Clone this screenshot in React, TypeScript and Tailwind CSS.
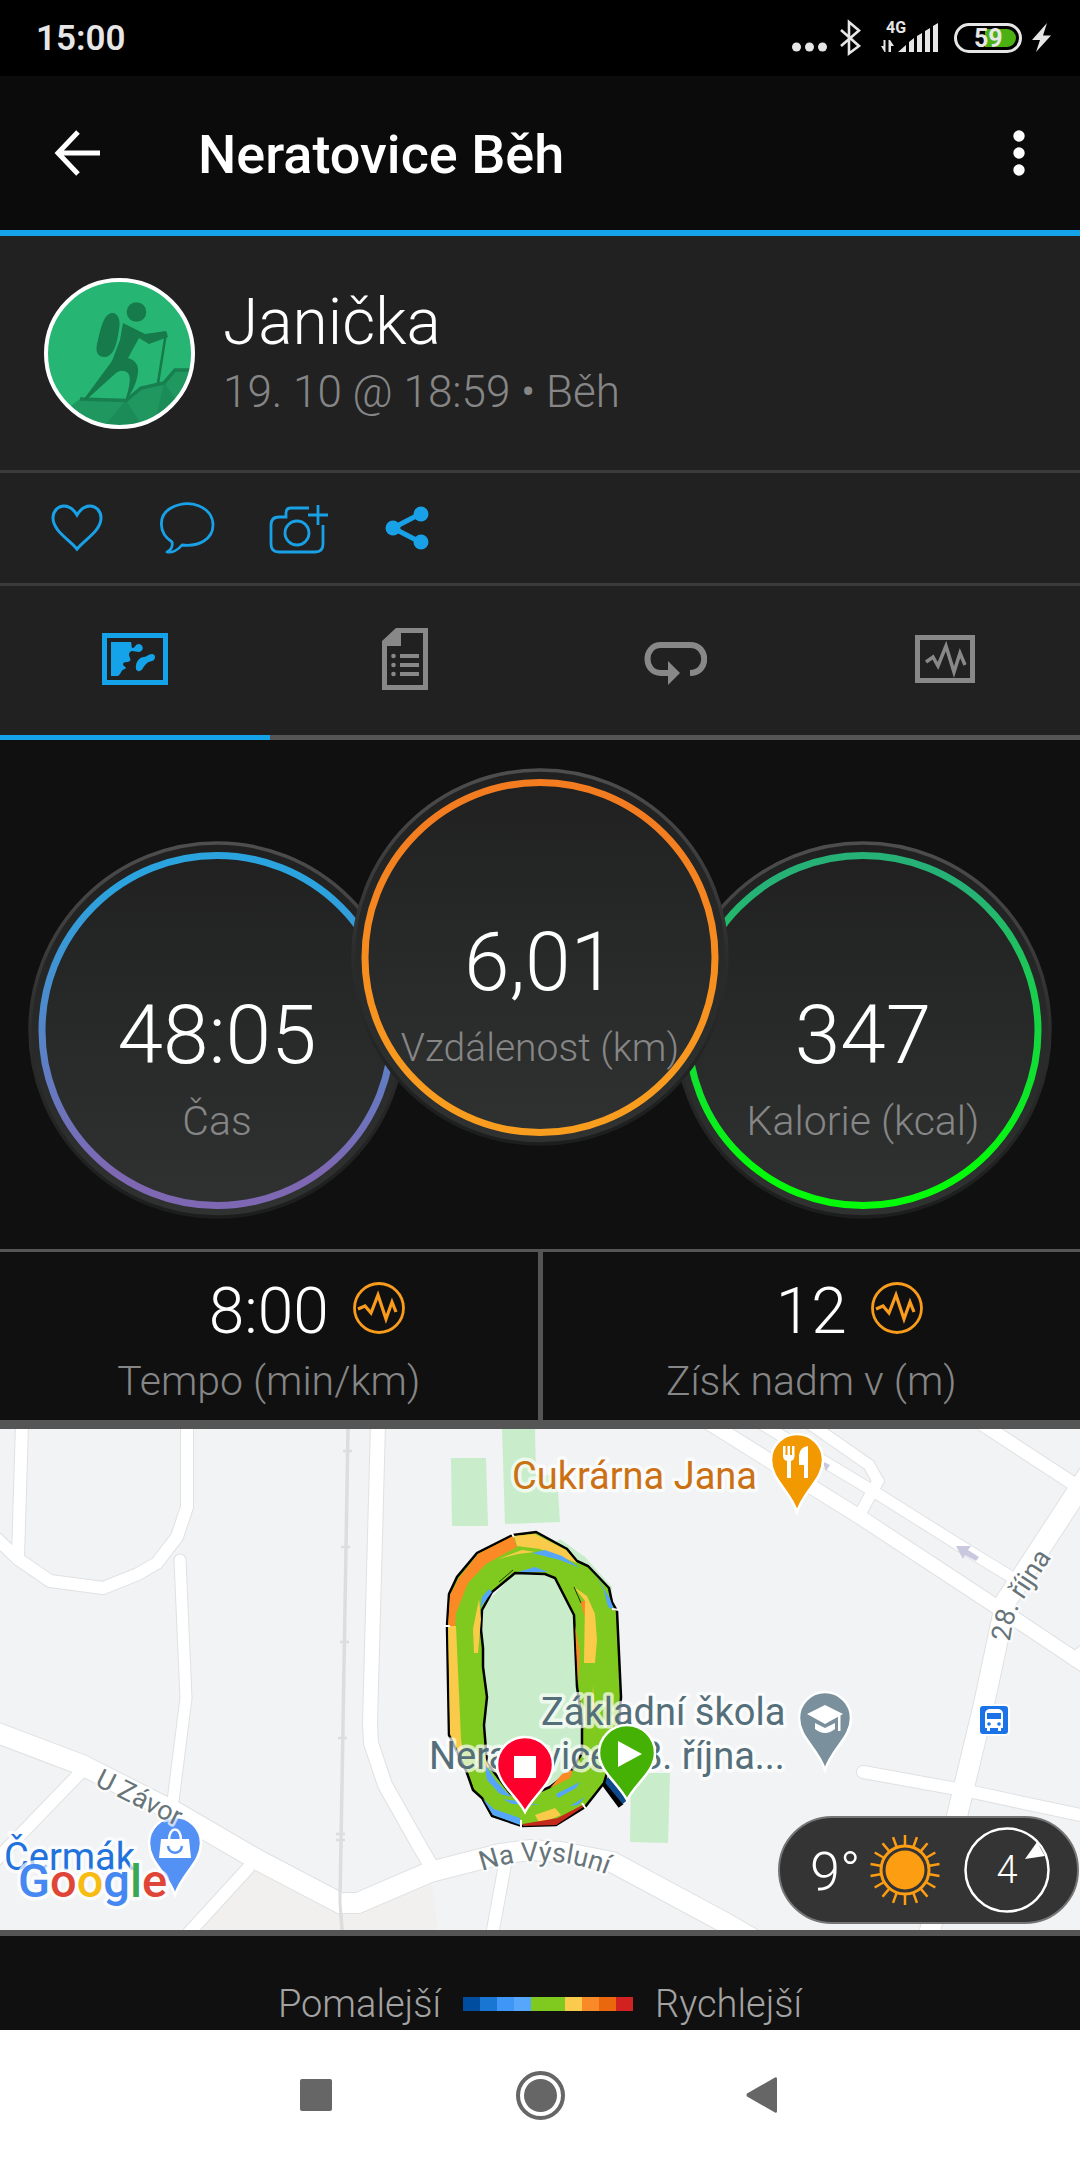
import React, { useState } from 'react';

type TabId = 'map' | 'details' | 'laps' | 'charts';

const tabs: { id: TabId; label: string; icon: React.ReactNode }[] = [
  { id: 'map', label: 'Mapa', icon: <MapIcon /> },
  { id: 'details', label: 'Detaily', icon: <DetailsIcon /> },
  { id: 'laps', label: 'Okruhy', icon: <LapsIcon /> },
  { id: 'charts', label: 'Grafy', icon: <ChartIcon /> },
];

const rings = [
  { id: 'time', value: '48:05', label: 'Čas', from: '#2ba3de', to: '#7e68b4', className: 'mt-[73px]', labelClass: 'text-[41px]' },
  { id: 'distance', value: '6,01', label: 'Vzdálenost (km)', from: '#f37c20', to: '#f99d1f', className: 'z-10 -mx-[55px]', labelClass: 'text-[39px]' },
  { id: 'calories', value: '347', label: 'Kalorie (kcal)', from: '#26b276', to: '#04fb0a', className: 'mt-[73px]', labelClass: 'text-[41px]' },
];

const stats = [
  { value: '8:00', label: 'Tempo (min/km)' },
  { value: '12', label: 'Získ nadm v (m)' },
];

const paceColors = [
  '#004c9e', '#1976d2', '#3f96f6', '#56a7fc', '#80c91e',
  '#80c91e', '#facb4c', '#f98a27', '#ea670e', '#d22121',
];

function StatusBar() {
  return (
    <div className="flex h-[76px] items-center justify-between bg-black pt-0.5 pr-7 pl-9 text-[#e6e6e6]">
      <span className="text-[35px] font-semibold">15:00</span>
      <svg width="262" height="40" viewBox="790 19 262 40" fill="#e6e6e6">
        <circle cx="796.500" cy="47" r="4.500" />
        <circle cx="809.500" cy="47" r="4.500" />
        <circle cx="822.500" cy="47" r="4.500" />
        <path d="M841 30 L859 46 L849 53.500 V22 L859 30.500 L841 46" fill="none" stroke="#e6e6e6" strokeWidth="2.600" />
        <text x="886" y="33" fontSize="16" fontWeight="700">4G</text>
        <path d="M881 46 h2.500 V40 h2 V52 h-1 Z M888.500 52 V40 h1.500 l4 6 h-3 V52 Z" />
        <path d="M898 52 L906 45 V52 Z M909 52 V42 L914 38 V52 Z M917 52 V36 L922 33 V52 Z M925 52 V31 L930 28 V52 Z M933 52 V26 L938 23 V52 Z" />
        <rect x="955.500" y="24.500" width="65" height="27" rx="13.500" fill="none" stroke="#e6e6e6" strokeWidth="3" />
        <path d="M985 29 H1007 A9 9 0 0 1 1007 47 H985 Z" fill="#4bb011" />
        <text x="974" y="47" fontSize="25" fontWeight="700">59</text>
        <path d="M1047 23 L1032 40 H1040 L1036 52 L1051 35.500 H1043 Z" />
      </svg>
    </div>
  );
}

function Avatar() {
  return (
    <svg className="shrink-0" width="151" height="151" viewBox="0 0 151 151">
      <defs>
        <clipPath id="avatar-clip"><circle cx="75.500" cy="75.500" r="73" /></clipPath>
      </defs>
      <circle cx="75.500" cy="75.500" r="73.500" fill="#26b573" />
      <g clipPath="url(#avatar-clip)">
        <path d="M24 130 L36 121 L82 122 L97 110 L120 105 L131 92 L151 90 V151 H0 Z" fill="#1f975f" />
        <path d="M36 121 L58 151 L82 122 L100 151 H58 Z M120 105 L112 140 L145 140 Z" fill="#1b8c57" />
        <path d="M36 121 L82 122.500 L97 110 L120 105 L131 92 H149" fill="none" stroke="#187f4f" strokeWidth="3.500" />
        <g fill="#167a4b">
          <circle cx="92.500" cy="34" r="9.800" />
          <path d="M68 35 C74 35 77 42 75 51 C73 66 70 78 61 79 C52 79 51 72 54 62 C57 49 60 36 68 35 Z" />
          <path d="M79 45 L101 56 L122 53 L124 59 L105 66 L95 60 L84 80 C91 82 95 87 94 94 C93 104 89 112 83 121 L82 120 C86 108 87 98 84 95 C80 92 76 92 72 95 L42 122 L40 121 L68 83 L76 62 Z" />
        </g>
        <path d="M122 55 L114 105" stroke="#167a4b" strokeWidth="2.500" />
      </g>
      <circle cx="75.500" cy="75.500" r="73.500" fill="none" stroke="#fff" strokeWidth="4" />
    </svg>
  );
}

function MapIcon() {
  return (
    <svg width="66" height="52" viewBox="0 0 66 52" fill="currentColor">
      <rect x="2.500" y="2.500" width="61" height="47" fill="none" stroke="currentColor" strokeWidth="5" />
      <path d="M9 9 H29 C30 12 29 15 31 15 C34 14 33 11 37 11 C42 12 42 18 37 19 C33 19 30 17 28 19 C25 22 30 26 28 28 C25 30 22 28 21 31 C21 34 26 34 23 36 C18 37 19 43 15 43 H9 Z" />
      <path d="M34 36 C33 30 37 24 42 24 C45 24 46 21 50 21 C54 21 54 27 50 28 C45 29 43 32 41 35 C39 39 35 39 34 36 Z" />
    </svg>
  );
}

function DetailsIcon() {
  return (
    <svg width="46" height="62" viewBox="0 0 46 62" fill="currentColor">
      <path fillRule="evenodd" d="M14 0 H46 V62 H0 V13 Z M19 5 V18 H5 V57 H41 V5 Z" />
      <path d="M18 26 H37 V30 H18 Z M18 35 H37 V39 H18 Z M18 44 H37 V48 H18 Z" />
      <circle cx="11.500" cy="28" r="2.300" />
      <circle cx="11.500" cy="37" r="2.300" />
      <circle cx="11.500" cy="46" r="2.300" />
    </svg>
  );
}

function LapsIcon() {
  return (
    <svg className="mt-2" width="63" height="43" viewBox="0 0 63 43">
      <path d="M25 31 H17 C-1 31 -1 3 17 3 H46 C65 3 65 31 46 31" fill="none" stroke="currentColor" strokeWidth="6" />
      <path d="M24 19 L36 31 L24 43 Z" fill="currentColor" />
    </svg>
  );
}

function ChartIcon() {
  return (
    <svg width="60" height="48" viewBox="0 0 60 48" fill="none" stroke="currentColor">
      <rect x="2.500" y="2.500" width="55" height="43" strokeWidth="5" />
      <path d="M11 27 L18 22 L23 31 L31 11 L39 37 L45 18 L50 30" strokeWidth="3.500" />
    </svg>
  );
}

function PulseIcon() {
  return (
    <svg width="52" height="52" viewBox="0 0 52 52" fill="none" stroke="#f99c1c">
      <circle cx="26" cy="26" r="24.500" strokeWidth="2.800" />
      <path d="M5 27 L12 24 L18 31 L25 13 L33 37 L39 20 L43 30" strokeWidth="3.200" />
    </svg>
  );
}

function ActionBar() {
  return (
    <div className="flex h-[116px] items-center border-y-[3px] border-[#3a3a3a] pl-[50px] text-[#18a1e6]">
      <button aria-label="Líbí se mi" className="w-[108px]">
        <svg width="54" height="54" viewBox="0 0 54 54" fill="none" stroke="currentColor" strokeWidth="3">
          <path d="M27 48 C20 39 3 30 3 17 C3 10 8 5 14 5 C20 5 24 9 27 14 C30 9 34 5 40 5 C46 5 51 10 51 17 C51 30 34 39 27 48 Z" />
        </svg>
      </button>
      <button aria-label="Komentář" className="w-[108px]">
        <svg width="58" height="54" viewBox="0 0 58 54" fill="none" stroke="currentColor" strokeWidth="2.800" strokeLinejoin="round">
          <path d="M14 41 C0 32 0 14 13 7 C32 -3 55 6 55 24 C55 38 41 46 24 44 C20 49 14 52 9 51 C13 49 15 45 14 41 Z" />
        </svg>
      </button>
      <button aria-label="Přidat fotku" className="w-[114px]">
        <svg width="62" height="54" viewBox="0 0 62 54" fill="none" stroke="currentColor" strokeWidth="2.800">
          <path d="M43 7 H25 Q20 7 20 12 V16 H13 Q5 16 5 24 V43 Q5 51 13 51 H49 Q57 51 57 43 V24" />
          <circle cx="31" cy="32" r="12" />
          <path d="M52 4 V24 M42 14 H62" />
        </svg>
      </button>
      <button aria-label="Sdílet">
        <svg width="54" height="46" viewBox="0 0 54 46" fill="currentColor">
          <path d="M41 8.500 L13 23 L41 37.500" fill="none" stroke="currentColor" strokeWidth="5" />
          <circle cx="41" cy="9" r="7.500" />
          <circle cx="13" cy="23" r="7.500" />
          <circle cx="41" cy="37" r="7.500" />
        </svg>
      </button>
    </div>
  );
}

function Ring({ id, value, label, from, to, className, labelClass }: (typeof rings)[number]) {
  return (
    <div className={`relative size-[378px] shrink-0 text-center ${className}`}>
      <svg className="absolute inset-0" width="378" height="378" viewBox="0 0 378 378">
        <defs>
          <linearGradient id={`${id}-face`} x1="0" y1="0" x2="0" y2="1">
            <stop offset="0" stopColor="#202020" />
            <stop offset="1" stopColor="#303232" />
          </linearGradient>
          <linearGradient id={`${id}-rim`} x1="0" y1="0" x2="0" y2="1">
            <stop offset="0" stopColor="#4e4e4e" />
            <stop offset="0.500" stopColor="#2c2c2c" />
            <stop offset="1" stopColor="#1c1d1d" />
          </linearGradient>
          <linearGradient id={`${id}-ring`} x1="0" y1="0" x2="0" y2="1">
            <stop offset="0.100" stopColor={from} />
            <stop offset="0.900" stopColor={to} />
          </linearGradient>
        </defs>
        <circle cx="189" cy="189" r="187" fill={`url(#${id}-face)`} stroke={`url(#${id}-rim)`} strokeWidth="3.500" />
        <circle cx="189" cy="189.500" r="175" fill="none" stroke={`url(#${id}-ring)`} strokeWidth="7" />
      </svg>
      <div className="relative pt-[146px] font-light">
        <div className="text-[82px] leading-[96px] text-white">{value}</div>
        <div className={`mt-3.5 leading-[48px] whitespace-nowrap text-[#868686] ${labelClass}`}>{label}</div>
      </div>
    </div>
  );
}

const poiPin = 'M0 52 C-7 30 -26 20 -26 0 A26 26 0 0 1 26 0 C26 20 7 30 0 52 Z';
const routePin = 'M0 47 C-9 30 -28 18 -28 0 A28 28 0 0 1 28 0 C28 18 9 30 0 47 Z';

const roads: { d: string; width: number; round?: boolean }[] = [
  { d: 'M22 -5 L18 128', width: 12 },
  { d: 'M-5 108 L18 130 L50 152 L103 159 L138 145 L157 134 L177 108 L187 78 V-5', width: 12 },
  { d: 'M180 131 L186 269 L172 380', width: 11, round: true },
  { d: 'M82 342 L-5 432', width: 12 },
  { d: 'M250 437 L186 507', width: 12 },
  { d: 'M378 -5 L370 294 L371 314 L385 356 L420 418 L436 445', width: 14 },
  { d: 'M506 430 L492 506', width: 12 },
  { d: 'M-5 303 L82 336 L177 384 L256 430 L340 474 H358 L430 443 L500 425 L530 421 L560 423 L612 433 L720 491 L760 514', width: 20 },
  { d: 'M706 -8 L860 88 L1003 182 L1090 240', width: 14 },
  { d: 'M762 -5 L873 62 L967 121 L1018 152', width: 11 },
  { d: 'M806 -8 L869 36 L878 52 L860 85', width: 11 },
  { d: 'M982 -5 L1080 59', width: 13 },
  { d: 'M1068 232 L1085 220', width: 10 },
  { d: 'M1092 40 L1006 172 L984 275 L957 387 L929 506', width: 20 },
  { d: 'M863 343 L963 361 L1085 387', width: 12, round: true },
];

function PlaceMap() {
  return (
    <svg className="block h-[501px] w-full" viewBox="0 0 1080 501" preserveAspectRatio="xMidYMid slice">
      <rect width="1080" height="501" fill="#f1f3f5" />
      <path d="M196 501 L256 430 L340 474 H358 L430 443 L438 501 Z" fill="#f1f0ee" />
      <g fill="#c9edcb">
        <path d="M451 29 H486 L488 97 H452 Z" />
        <path d="M502 0 H535 L536 46 H557 L560 93 L505 95 Z" />
        <path d="M631 344 H670 L668 414 L630 413 Z" />
        <path d="M515 144 L560 110 L585 128 L612 158 L600 300 L560 350 L520 371 L487 334 L480 180 Z" />
      </g>
      <path d="M348 0 L340 474 L342 501" fill="none" stroke="#dcdddf" strokeWidth="3.500" />
      {roads.map((road) => (
        <path key={road.d} d={road.d} fill="none" stroke="#dfe1e3" strokeWidth={road.width + 2} strokeLinecap={road.round ? 'round' : 'butt'} />
      ))}
      {roads.map((road) => (
        <path key={road.d} d={road.d} fill="none" stroke="#fff" strokeWidth={road.width} strokeLinecap={road.round ? 'round' : 'butt'} />
      ))}
      <path d="M340 460 V474 L342 501" fill="none" stroke="#dcdddf" strokeWidth="3" />
      <path d="M343 22 h9 M341 118 h9 M340 213 h9 M338 309 h9 M336 405 h9 M336 411 h9" stroke="#dcdddf" strokeWidth="2.500" />
      <path d="M956 117 L971 117 L968 121 L979 128 L976 132 L965 126 L963 130 Z" fill="#c8c9df" />
      <path d="M822 32 L830 36 L826 42 Z" fill="#c8c9df" />

      {/* running track */}
      <path d="M604 354 L621 377" stroke="#000" strokeWidth="6" />
      <path d="M606 350 L625 373" stroke="#0e4a8c" strokeWidth="6" />
      <path
        fillRule="evenodd"
        fill="#80c91e"
        stroke="#000"
        strokeWidth="2.500"
        d="M513 106 L536 103 L567 120 L577 132 L588 137 L609 159 L612 173 L617 182 L621 268 L618 308 L604 354 L585 378 L556 396 L522 397 L492 387 L482 369 L473 361 L467 344 L449 306 L447 197 L449 165 L457 148 L477 124 Z M515 144 L492 163 L482 181 L481 201 L483 219 L483 238 L487 268 L484 296 L487 334 L510 364 L520 371 L550 358 L572 341 L582 324 L582 291 L577 258 L574 186 L555 149 L545 145 Z"
      />
      <g fill="#fb8a26">
        <path d="M513 107 L517 118 L486 135 L468 154 L456 184 L455 197 H448 L450 166 L459 149 L478 125 Z" />
        <path d="M575 196 L580 224 L578 256 Z" />
        <path d="M550 359 L562 345 L573 341 L570 349 Z" />
        <path d="M580 172 L585 172 V188 Z" />
      </g>
      <g fill="#facb4a">
        <path d="M514 107 L535 105 L566 121 L577 134 L540 120 L517 117 Z" />
        <path d="M448 197 H456 L461 310 L464 332 L450 305 Z" />
        <path d="M479 170 L481 190 L478 224 H474 L473 200 Z" />
        <path d="M574 158 L587 167 L595 185 L597 211 L595 234 H584 L585 172 Z" />
        <path d="M498 130 L522 121 L535 123 L518 125 Z" />
        <path d="M535 386 L555 379 L561 386 L540 395 Z" />
        <path d="M593 256 L595 290 L592 280 Z" />
        <path d="M484 326 L489 338 L486 340 Z" />
      </g>
      <g fill="#55a6fa">
        <path d="M532 124 L545 121 L562 127 L580 139 L560 131 Z" />
        <path d="M518 143 L535 138 L548 143 Z" />
        <path d="M480 179 L482 168 L489 160 L492 163 Z" />
        <path d="M596 146 L610 170 L614 181 L608 178 L604 162 Z" />
        <path d="M484 334 L496 352 L511 368 L500 365 L487 351 Z" />
        <path d="M483 370 L494 380 L520 389 V396 L493 386 Z" />
        <path d="M556 365 L580 353 L576 359 L558 369 Z" />
        <path d="M570 377 L585 368 L578 376 Z" />
        <path d="M503 370 L518 372 L540 376 L512 375 Z" />
      </g>
      <path d="M523 396 L558 390 L583 377 L556 395 Z" fill="#c42a1c" stroke="#c42a1c" strokeWidth="2" />
      <path d="M499 153 L513 141 M574 158 L581 174" stroke="#1b3d00" strokeWidth="1" />
      <path d="M511 103 L514 108 M444 197 H450 M521 391 V401 M582 374 L586 380 M612 180 L620 181" stroke="#fff" strokeWidth="2" />

      {/* labels */}
      <g fontSize="38" stroke="#fff" strokeOpacity="0.700" strokeWidth="7" strokeLinejoin="round" paintOrder="stroke">
        <text x="512" y="60" fill="#cc7014">Cukrárna Jana</text>
        <text x="541" y="296" fill="#546e7a">Základní škola</text>
        <text x="429" y="340" fill="#546e7a">Neratovice 28. října...</text>
        <text x="4" y="441" fill="#2172dc">Čermák</text>
      </g>

      <g stroke="#fff" strokeWidth="2.500">
        <g transform="translate(797 31)">
          <path d={poiPin} fill="#f29900" />
          <path d="M-14 -14 h2.500 v9 h2 v-9 h2.500 v9 h2 v-9 h2.500 v10 q0 4 -3.500 5 v17 h-4 v-17 q-4 -1 -4 -5 Z M11 -14 v32 h-4 v-13 h-5 v-10 q1 -8 9 -9 Z" fill="#fff" stroke="none" />
        </g>
        <g transform="translate(825 289)">
          <path d={poiPin} fill="#7a909c" />
          <path d="M0 -13 L18 -4 L0 6 L-18 -4 Z M13 -3 H15.500 V13 H13 Z M-10 5 L0 10 L10 5 V11 Q0 19 -10 11 Z" fill="#fff" stroke="none" />
        </g>
        <g transform="translate(175 414)">
          <path d={poiPin} fill="#5491f5" />
          <path d="M-14 -4 H14 L16 15 H-16 Z" fill="#fff" stroke="none" />
          <path d="M-6 -3 C-6 -17 6 -17 6 -3" fill="none" />
          <path d="M-7 3 C-6 12 6 12 7 3" fill="none" stroke="#5491f5" />
        </g>
        <g transform="translate(627 324)">
          <path d={routePin} fill="#45b104" />
          <path d="M-9 -12 L15 1 L-9 14 Z" fill="#fff" stroke="none" />
        </g>
        <g transform="translate(525 336)">
          <path d={routePin} fill="#fd002c" />
          <rect x="-11" y="-9" width="22" height="22" fill="#fff" stroke="none" />
        </g>
      </g>

      <g>
        <rect x="979" y="276" width="30" height="30" rx="4" fill="#1c73e8" stroke="#fff" strokeWidth="2" />
        <path fillRule="evenodd" d="M989 280 H999 Q1003 281 1003 285 V299 H1001 V302 H998 V299 H990 V302 H987 V299 H985 V285 Q985 281 989 280 Z M987 284 V290 H1001 V284 Z" fill="#fff" />
        <circle cx="989" cy="295" r="1.800" fill="#1c73e8" />
        <circle cx="999" cy="295" r="1.800" fill="#1c73e8" />
      </g>

      <defs>
        <path id="street-vysluni" d="M482 442 Q545 420 611 447" />
        <path id="street-zavor" d="M94 356 L190 404" />
        <path id="street-rijna" d="M1010 213 Q1013 184 1025 168 L1065 108" />
      </defs>
      <g fontSize="27" fill="#67757b" stroke="#fff" strokeOpacity="0.700" strokeWidth="5" strokeLinejoin="round" paintOrder="stroke">
        <text><textPath href="#street-vysluni">Na Výsluní</textPath></text>
        <text><textPath href="#street-zavor">U Závor</textPath></text>
        <text><textPath href="#street-rijna">28. října</textPath></text>
      </g>

      <text x="18" y="468" fontSize="47" fontWeight="500" stroke="#fff" strokeOpacity="0.700" strokeWidth="7" strokeLinejoin="round" paintOrder="stroke">
        <tspan fill="#4688f1">G</tspan>
        <tspan fill="#e04637">o</tspan>
        <tspan fill="#f6bc12">o</tspan>
        <tspan fill="#4688f1">g</tspan>
        <tspan fill="#3aa757">l</tspan>
        <tspan fill="#e04637">e</tspan>
      </text>
    </svg>
  );
}

const sunRays = Array.from({ length: 18 }, (_, i) => i * 20);

function WeatherBadge() {
  return (
    <div className="absolute right-px bottom-1.5 flex h-[108px] w-[301px] items-center rounded-full border-2 border-[#757575] bg-[#343434] pl-[30px] font-light text-white">
      <span className="w-[59px] pt-1 text-[54px] leading-[60px]">9°</span>
      <svg width="72" height="72" viewBox="-36 -36 72 72" fill="none" stroke="#fd9d12">
        <circle r="19.500" fill="#fd9d12" stroke="none" />
        <circle r="24" strokeWidth="3" />
        {sunRays.map((angle) => (
          <path key={angle} d="M0 -25 V-35" strokeWidth="2.500" transform={`rotate(${angle})`} />
        ))}
      </svg>
      <div className="relative ml-[23px] flex size-[86px] items-center justify-center">
        <svg className="absolute inset-0" width="86" height="86" viewBox="0 0 86 86">
          <circle cx="43" cy="43" r="41.500" fill="none" stroke="#fff" strokeWidth="2.500" />
          <path d="M73 15 L61 32 L81 29 Z" fill="#fff" />
        </svg>
        <span className="text-[38px]">4</span>
      </div>
    </div>
  );
}

const App: React.FC = () => {
  const [activeTab, setActiveTab] = useState<TabId>('map');

  return (
    <div className="flex min-h-screen w-full flex-col overflow-hidden bg-[#101010] font-[Roboto,sans-serif]">
      <StatusBar />

      <header className="flex h-40 items-center border-b-[6px] border-[#14a3e8] bg-[#0b0b0b] pr-[35px] pl-[54px] text-white">
        <button aria-label="Zpět">
          <svg width="46" height="46" viewBox="0 0 46 46" fill="none" stroke="currentColor" strokeWidth="5">
            <path d="M46 23 H4 M24 2 L4 23 L24 44" />
          </svg>
        </button>
        <h1 className="ml-[98px] flex-1 pt-0.5 text-[54px] font-medium">Neratovice Běh</h1>
        <button aria-label="Další možnosti" className="px-5">
          <svg width="12" height="46" viewBox="0 0 12 46" fill="currentColor">
            <circle cx="6" cy="6" r="5.700" />
            <circle cx="6" cy="23" r="5.700" />
            <circle cx="6" cy="40" r="5.700" />
          </svg>
        </button>
      </header>

      <main>
        <section className="bg-[#212121]">
          <div className="flex h-[234px] items-center gap-7 pl-11 font-light">
            <Avatar />
            <div className="pt-1.5">
              <h2 className="text-[64px] leading-[72px] text-white">Janička</h2>
              <p className="text-[44px] leading-[66px] text-[#868686]">19. 10 @ 18:59 • Běh</p>
            </div>
          </div>
          <ActionBar />
          <nav className="grid grid-cols-4">
            {tabs.map((tab) => (
              <button
                key={tab.id}
                aria-label={tab.label}
                onClick={() => setActiveTab(tab.id)}
                className={`flex h-[154px] items-center justify-center border-b-[5px] pb-[3px] ${activeTab === tab.id ? 'border-[#14a3e8] text-[#14a3e8]' : 'border-[#555] text-[#888]'}`}
              >
                {tab.icon}
              </button>
            ))}
          </nav>
        </section>

        <section className="flex h-[509px] justify-center pt-7">
          {rings.map((ring) => (
            <Ring key={ring.id} {...ring} />
          ))}
        </section>

        <section className="grid h-[180px] grid-cols-2 gap-[5px] border-t-[3px] border-b-[9px] border-[#555] bg-[#555] font-light">
          {stats.map((stat) => (
            <div key={stat.label} className="flex flex-col items-center bg-[#101010] pt-[22px]">
              <div className="relative text-[64px] leading-[76px] text-white">
                {stat.value}
                <span className="absolute top-2 left-full ml-6 block">
                  <PulseIcon />
                </span>
              </div>
              <div className="text-[41px] leading-[62px] text-[#868686]">{stat.label}</div>
            </div>
          ))}
        </section>

        <section className="relative">
          <PlaceMap />
          <WeatherBadge />
        </section>

        <section className="flex h-[100px] items-center justify-center gap-[22px] border-t-[6px] border-[#555] pt-[42px] text-[38px] font-light text-[#a3a3a3]">
          <span>Pomalejší</span>
          <div className="flex">
            {paceColors.map((color, i) => (
              <span key={i} className="h-3.5 w-[17px]" style={{ backgroundColor: color }} />
            ))}
          </div>
          <span>Rychlejší</span>
        </section>
      </main>

      <footer className="grid h-[130px] grid-cols-3 bg-white px-[204px] text-[#666]">
        <button aria-label="Poslední aplikace" className="flex items-center justify-center">
          <span className="size-8 rounded-[2px] bg-[#666]" />
        </button>
        <button aria-label="Domů" className="flex items-center justify-center">
          <span className="flex size-[49px] items-center justify-center rounded-full border-4 border-[#666]">
            <span className="size-[33px] rounded-full bg-[#666]" />
          </span>
        </button>
        <button aria-label="Zpět v systému" className="flex items-center justify-center">
          <svg width="36" height="36" viewBox="0 0 36 36" fill="currentColor">
            <path d="M1 16.500 Q0 18 1 19.500 L29 35.500 Q31 36.500 31 34 V2 Q31 -0.500 29 0.500 Z" />
          </svg>
        </button>
      </footer>
    </div>
  );
};

export default App;
